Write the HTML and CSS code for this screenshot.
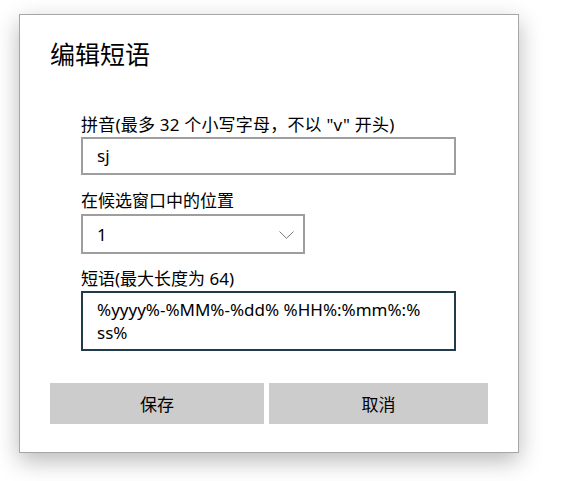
FILE: index.html
```html
<!DOCTYPE html>
<html lang="zh-CN">
<head>
<meta charset="utf-8">
<title>编辑短语</title>
<link rel="stylesheet" href="styles.css">
</head>
<body>
<div class="dialog">
  <h1 class="title">编辑短语</h1>
  <div class="form">
    <label class="label label-first">拼音(最多 32 个小写字母，不以 "v" 开头)</label>
    <div class="field input">sj</div>
    <label class="label label-second">在候选窗口中的位置</label>
    <div class="field select">
      <span>1</span>
      <svg class="chevron" width="15" height="8" viewBox="0 0 15 8"><path d="M0.5 0.5 L7.5 7.3 L14.5 0.5" fill="none" stroke="#7a7a7a" stroke-width="1"/></svg>
    </div>
    <label class="label label-third">短语(最大长度为 64)</label>
    <div class="field textarea">%yyyy%-%MM%-%dd% %HH%:%mm%:%<br>ss%</div>
  </div>
  <div class="buttons">
    <button class="btn">保存</button>
    <button class="btn">取消</button>
  </div>
</div>
</body>
</html>
```
FILE: styles.css
```css
html, body {
  margin: 0;
  padding: 0;
  background: #ffffff;
}
body {
  width: 568px;
  height: 481px;
  overflow: hidden;
  font-family: "Noto Sans", "Noto Sans CJK SC", sans-serif;
  color: #000;
}
.dialog {
  box-sizing: border-box;
  margin: 14px 0 0 19px;
  width: 500px;
  height: 439px;
  border: 1px solid #a6a6a6;
  background: #fff;
  box-shadow: 0 8px 22px rgba(0, 0, 0, 0.28);
  padding: 23px 29px 0 30px;
  display: flex;
  flex-direction: column;
}
.title {
  margin: 0;
  font-weight: normal;
  font-size: 25px;
  line-height: 32px;
  height: 32px;
}
.form {
  display: flex;
  flex-direction: column;
  padding-left: 31px;
  margin-top: 44px;
}
.label {
  display: block;
  font-size: 17px;
  line-height: 22px;
  margin: 15px 0 1px;
}
.label-first { margin-top: 0; letter-spacing: 0.2px; }
.label-second { margin-bottom: 2px; }
.label-third { margin-top: 14px; margin-bottom: 1px; }
.field {
  box-sizing: border-box;
  border: 2px solid #9e9e9e;
  background: #fff;
  font-size: 17px;
  padding-left: 14px;
}
.input {
  width: 375px;
  height: 38px;
  line-height: 34px;
}
.select {
  width: 224px;
  height: 40px;
  display: flex;
  align-items: center;
  justify-content: space-between;
  padding-right: 9px;
}
.chevron { display: block; margin-top: 1px; }
.textarea {
  width: 375px;
  height: 60px;
  border-color: #1f3b4c;
  line-height: 23px;
  padding-top: 5px;
}
.buttons {
  display: grid;
  grid-template-columns: 214px 219px;
  column-gap: 5px;
  margin-top: 32px;
}
.btn {
  height: 41px;
  border: none;
  background: #cccccc;
  font-family: "Noto Sans CJK SC", sans-serif;
  font-size: 17px;
  color: #000;
  padding: 0;
}
```
